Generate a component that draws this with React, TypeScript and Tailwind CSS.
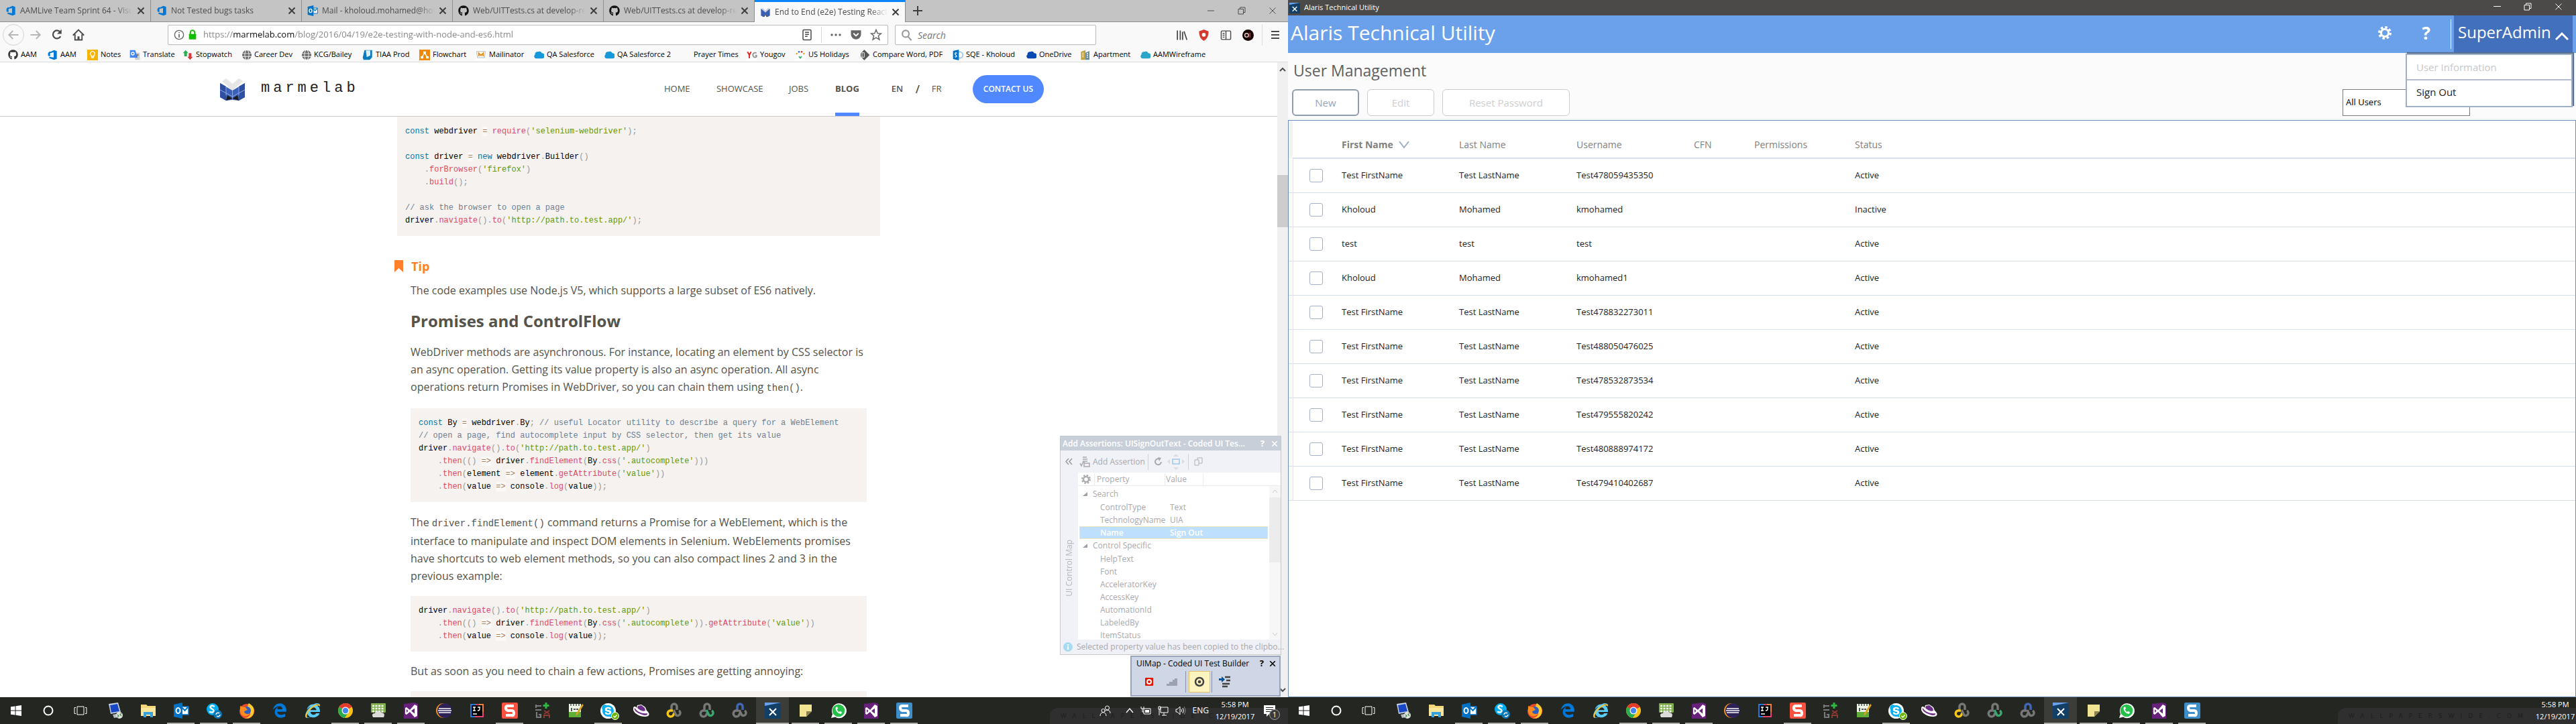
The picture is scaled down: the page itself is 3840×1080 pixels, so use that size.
import React from "react";
import { FaGithub, FaEdgeLegacy, FaInternetExplorer, FaSkype, FaGlobe } from "react-icons/fa6";

/* ---------- small drawings ---------- */

type Kids = { children?: React.ReactNode };

const Svg = ({ size = 16, box = 24, children }: Kids & { size?: number; box?: number }) => (
  <svg width={size} height={size} viewBox={`0 0 ${box} ${box}`} fill="none" aria-hidden="true" className="shrink-0">
    {children}
  </svg>
);

const AzureIcon = () => (
  <Svg>
    <path d="M16 1l6 2.500v17L16 23 5 19v-3l10 1.500V6L7 8v7l-4.500-1V7.500L6 4l2 1z" fill="#0078d7" />
  </Svg>
);
const OutlookIcon = ({ size = 16 }: { size?: number }) => (
  <Svg size={size}>
    <path d="M13 6h10v12H13z" fill="#fff" stroke="#0072c6" strokeWidth="1.500" />
    <path d="M14 8l3.500 4L22 7" stroke="#0072c6" strokeWidth="2" />
    <path d="M1 3l13-3v24L1 21z" fill="#0072c6" />
    <ellipse cx="7.500" cy="12" rx="3" ry="4" stroke="#fff" strokeWidth="2" />
  </Svg>
);
const MarmelabIcon = ({ size = 16 }: { size?: number }) => (
  <Svg size={size}>
    <path d="M2 4l10 8L22 4v16l-5 3-5-6-5 6-5-3z" fill="#3b5fb4" />
    <path d="M7 23l5-6 5 6-3-1-2-4-2 4z" fill="#222" />
    <path d="M6 3l6 6 6-6 3 2-9 8-9-8z" fill="#c9cfdd" />
  </Svg>
);
const CloudIcon = ({ color }: { color: string }) => (
  <Svg>
    <path d="M6 20a5 5 0 0 1-2-9 5 5 0 0 1 6-6 6 6 0 0 1 9 3 6 6 0 0 1 0 12z" fill={color} />
  </Svg>
);
const CloseMark = ({ size = 12, width = 2 }: { size?: number; width?: number }) => (
  <Svg size={size} box={12}>
    <path d="M1.500 1.500l9 9M10.500 1.500l-9 9" stroke="currentColor" strokeWidth={width} />
  </Svg>
);
const RestoreMark = () => (
  <Svg size={12} box={12}>
    <path d="M1 3.500h7.500V11H1zM3.500 3V1H11v7.500H9" stroke="currentColor" />
  </Svg>
);
const GearShape = ({ size = 20, hole = "#6ba1ea" }: { size?: number; hole?: string }) => (
  <Svg size={size}>
    <circle cx="12" cy="12" r="10" stroke="currentColor" strokeWidth="4" strokeDasharray="4.200 3.650" />
    <circle cx="12" cy="12" r="8.500" fill="currentColor" />
    <circle cx="12" cy="12" r="4.800" fill={hole} />
  </Svg>
);

/* ---------- browser: tabs, toolbar, bookmarks ---------- */

const tabs = [
  { title: "AAMLive Team Sprint 64 - Visual Studio", icon: <AzureIcon /> },
  { title: "Not Tested bugs tasks", icon: <AzureIcon /> },
  { title: "Mail - kholoud.mohamed@hotmail", icon: <OutlookIcon /> },
  { title: "Web/UITTests.cs at develop-release", icon: <FaGithub size={16} color="#111" /> },
  { title: "Web/UITTests.cs at develop-release", icon: <FaGithub size={16} color="#111" /> },
  { title: "End to End (e2e) Testing React Apps", icon: <MarmelabIcon />, active: true },
];

function TabStrip() {
  return (
    <div className="flex h-[33px] shrink-0 bg-[#c4c4c4] text-[#4c4c4c]">
      {tabs.map((t, i) => (
        <div
          key={i}
          className={
            t.active
              ? "flex w-[225px] items-center gap-1.5 border-t-[3px] border-r border-t-[#0a84ff] border-r-[#8a8a8a] bg-[#f9f9fa] px-2"
              : "flex w-[225px] items-center gap-1.5 border-r border-b border-[#8f8f8f] px-2"
          }
        >
          {t.icon}
          <button className="min-w-0 flex-1 overflow-hidden text-left text-[12px] whitespace-nowrap [mask-image:linear-gradient(to_right,black_85%,transparent)]">
            {t.title}
          </button>
          <button aria-label="Close tab" className="text-[#3d3d3d]">
            <CloseMark />
          </button>
        </div>
      ))}
      <div className="flex flex-1 items-center border-b border-[#8f8f8f] pl-2.5">
        <button aria-label="New tab" className="text-[#3d3d3d]">
          <Svg size={16} box={16}>
            <path d="M8 1v14M1 8h14" stroke="currentColor" strokeWidth="2" />
          </Svg>
        </button>
        <div className="ml-auto flex items-center gap-[34px] pr-[17px] text-[#4c4c4c]">
          <button aria-label="Minimize">
            <Svg size={12} box={12}>
              <path d="M1 6h10" stroke="currentColor" />
            </Svg>
          </button>
          <button aria-label="Restore">
            <RestoreMark />
          </button>
          <button aria-label="Close">
            <CloseMark width={1} />
          </button>
        </div>
      </div>
    </div>
  );
}

function NavBar() {
  return (
    <div className="flex h-[38px] shrink-0 items-center bg-[#f9f9fa] text-[#4a4a4a]">
      <button aria-label="Back" className="ml-1 flex size-8 items-center justify-center rounded-full border border-[#d4d4d4] text-[#b5b5b5]">
        <Svg size={18}>
          <path d="M22 12H3M11 4l-8 8 8 8" stroke="currentColor" strokeWidth="2.500" />
        </Svg>
      </button>
      <button aria-label="Forward" className="ml-2 text-[#b5b5b5]">
        <Svg size={18}>
          <path d="M2 12h19M13 4l8 8-8 8" stroke="currentColor" strokeWidth="2.500" />
        </Svg>
      </button>
      <button aria-label="Reload" className="ml-3.5">
        <Svg size={18}>
          <path d="M19 15a8 8 0 1 1-1-9" stroke="currentColor" strokeWidth="3" />
          <path d="M21 1v9h-9z" fill="currentColor" />
        </Svg>
      </button>
      <button aria-label="Home" className="ml-3.5">
        <Svg size={18}>
          <path d="M1 13L12 2l11 11M5 11v11h14V11" stroke="currentColor" strokeWidth="2.500" />
          <path d="M10 22v-7h4v7z" fill="currentColor" />
        </Svg>
      </button>
      <div className="ml-[124px] flex h-[30px] flex-1 items-center rounded-xs border border-[#bdbdbd] bg-white px-2 shadow-xs">
        <Svg size={16}>
          <circle cx="12" cy="12" r="10" stroke="#666" strokeWidth="2" />
          <path d="M12 10v8M12 6v2" stroke="#666" strokeWidth="2.500" />
        </Svg>
        <span className="ml-1">
          <Svg size={16}>
            <path d="M7 11V7a5 5 0 0 1 10 0v4" stroke="#12bc00" strokeWidth="3" />
            <rect x="4" y="10" width="16" height="12" rx="1" fill="#12bc00" />
          </Svg>
        </span>
        <input
          aria-label="Address"
          readOnly
          value="https://marmelab.com/blog/2016/04/19/e2e-testing-with-node-and-es6.html"
          className="ml-2 min-w-0 flex-1 bg-[linear-gradient(to_right,#858585_45px,#0c0c0d_45px,#0c0c0d_136px,#858585_136px)] bg-clip-text text-[13px] text-transparent outline-none"
        />
        <div className="flex items-center gap-3">
          <button aria-label="Reader view">
            <Svg size={18}>
              <rect x="4" y="2" width="16" height="20" rx="2" stroke="currentColor" strokeWidth="2" />
              <path d="M8 7h8M8 11h8M8 15h5" stroke="currentColor" strokeWidth="2" />
            </Svg>
          </button>
          <span className="h-6 w-px bg-[#d8d8d8]" />
          <button aria-label="Page actions">
            <Svg size={18}>
              <circle cx="4" cy="12" r="2.300" fill="#666" />
              <circle cx="12" cy="12" r="2.300" fill="#666" />
              <circle cx="20" cy="12" r="2.300" fill="#666" />
            </Svg>
          </button>
          <button aria-label="Save to Pocket">
            <Svg size={18}>
              <path d="M2 3h20v8a10 10 0 0 1-20 0z" fill="#666" />
              <path d="M7 9l5 5 5-5" stroke="#fff" strokeWidth="2.500" />
            </Svg>
          </button>
          <button aria-label="Bookmark this page">
            <Svg size={18}>
              <path d="M12 2l3 7 7 .500-5.500 4.500 2 7.500L12 17.500 5.500 21.500l2-7.500L2 9.500 9 9z" stroke="#666" strokeWidth="2" />
            </Svg>
          </button>
        </div>
      </div>
      <div className="ml-2.5 flex h-[30px] w-[300px] items-center gap-2 rounded-xs border border-[#bdbdbd] bg-white px-2 shadow-xs">
        <Svg size={17}>
          <circle cx="10" cy="9" r="7" stroke="#999" strokeWidth="3" />
          <path d="M15 15l7 8" stroke="#999" strokeWidth="3" />
        </Svg>
        <input aria-label="Search" placeholder="Search" className="min-w-0 flex-1 text-[14px] italic outline-none placeholder:text-[#757575]" />
      </div>
      <div className="ml-[119px] flex items-center gap-4 pr-3">
        <button aria-label="Library">
          <Svg size={17}>
            <path d="M3 2v20M9 2v20M14 5v17M17 4l6 18" stroke="currentColor" strokeWidth="2.500" />
          </Svg>
        </button>
        <button aria-label="Content blocker">
          <Svg size={17}>
            <path d="M12 0l10 4c0 10-3 16-10 20C5 20 2 14 2 4z" fill="#d43b2d" />
            <circle cx="12" cy="11" r="4" fill="#fff" />
          </Svg>
        </button>
        <button aria-label="Sidebars">
          <Svg size={17}>
            <rect x="2" y="3" width="20" height="18" rx="2" stroke="currentColor" strokeWidth="2" />
            <path d="M12 3v18M5 8h4M5 12h4M5 16h4" stroke="currentColor" strokeWidth="2" />
          </Svg>
        </button>
        <button aria-label="Screen recorder">
          <Svg size={17}>
            <circle cx="12" cy="12" r="12" fill="#1a0505" />
            <circle cx="9" cy="12" r="4" stroke="#e8c7c7" strokeWidth="2" />
            <path d="M16 7v10" stroke="#c33" strokeWidth="2" />
          </Svg>
        </button>
        <span className="-mx-1 h-8 w-px bg-[#dcdcdc]" />
        <button aria-label="Menu">
          <Svg size={14} box={14}>
            <path d="M1 2h12M1 7h12M1 12h12" stroke="currentColor" strokeWidth="2" />
          </Svg>
        </button>
      </div>
    </div>
  );
}

const Square = ({ color, children }: Kids & { color: string }) => (
  <Svg>
    <rect width="24" height="24" fill={color} />
    {children}
  </Svg>
);

const bookmarks: { name: string; width: string; icon: React.ReactNode }[] = [
  { name: "AAM", width: "w-[58px]", icon: <FaGithub size={15} color="#333" /> },
  { name: "AAM", width: "w-[60px]", icon: <AzureIcon /> },
  {
    name: "Notes",
    width: "w-[63px]",
    icon: (
      <Square color="#f4b400">
        <path d="M9 18h6M12 4a5 5 0 0 1 3 9v2H9v-2a5 5 0 0 1 3-9z" stroke="#fff" strokeWidth="2" />
      </Square>
    ),
  },
  {
    name: "Translate",
    width: "w-[79px]",
    icon: (
      <Svg>
        <path d="M9 7h14v16H13z" fill="#ccc" />
        <path d="M1 1h12l5 17H1z" fill="#4285f4" />
        <circle cx="7.500" cy="9" r="3" stroke="#fff" strokeWidth="2" />
        <path d="M15 12h6M18 10v2l-3 6" stroke="#666" strokeWidth="1.500" />
      </Svg>
    ),
  },
  {
    name: "Stopwatch",
    width: "w-[89px]",
    icon: (
      <Svg>
        <path d="M7 1l6 7h-3v7H4V8H1z" fill="#28b04a" />
        <path d="M17 23l-6-7h3V8h6v8h3z" fill="#d93838" />
      </Svg>
    ),
  },
  { name: "Career Dev", width: "w-[89px]", icon: <FaGlobe size={14} color="#6b6b6b" /> },
  { name: "KCG/Bailey", width: "w-[90px]", icon: <FaGlobe size={14} color="#6b6b6b" /> },
  {
    name: "TIAA Prod",
    width: "w-[85px]",
    icon: (
      <Svg>
        <path d="M5 1h17v16l-5 6H3l-2-5z" fill="#0a7bbd" />
        <path d="M8 2h10v11l-8 4z" fill="#d9f0fa" />
      </Svg>
    ),
  },
  {
    name: "Flowchart",
    width: "w-[84px]",
    icon: (
      <Square color="#f08705">
        <path d="M12 8l-6 8M12 8l6 8" stroke="#fff" strokeWidth="2" />
        <path d="M9 4h6v5H9zM3 15h6v5H3zM15 15h6v5h-6z" fill="#fff" />
      </Square>
    ),
  },
  {
    name: "Mailinator",
    width: "w-[86px]",
    icon: (
      <Square color="#fff">
        <path d="M2 4h20l-2 14H4z" stroke="#bbb" strokeWidth="1.500" />
        <path d="M7 15V8l5 5 5-5v7" stroke="#e88d1e" strokeWidth="3" />
      </Square>
    ),
  },
  { name: "QA Salesforce", width: "w-[105px]", icon: <CloudIcon color="#1798d8" /> },
  { name: "QA Salesforce 2", width: "w-[114px]", icon: <CloudIcon color="#1798d8" /> },
  { name: "Prayer Times", width: "w-[99px]", icon: <span className="w-4 shrink-0" /> },
  {
    name: "Yougov",
    width: "w-[72px]",
    icon: (
      <Square color="#fff">
        <path d="M2 5l4 7v7M10 5l-4 7" stroke="#d22" strokeWidth="3" />
        <path d="M22 8a5 5 0 1 0 0 8v-3h-3" stroke="#999" strokeWidth="3" />
      </Square>
    ),
  },
  {
    name: "US Holidays",
    width: "w-[96px]",
    icon: (
      <Square color="#fff">
        <path d="M9 15l3 4 3-4" stroke="#3a6" strokeWidth="2.500" />
        <circle cx="4" cy="9" r="2" fill="#f4a020" />
        <circle cx="9" cy="5" r="2" fill="#36c" />
        <circle cx="15" cy="5" r="2" fill="#d33" />
        <circle cx="20" cy="9" r="2" fill="#f4a020" />
      </Square>
    ),
  },
  {
    name: "Compare Word, PDF",
    width: "w-[139px]",
    icon: (
      <Svg>
        <path d="M11 0l12 12-12 12-8-9V9z" fill="#555" />
        <path d="M6 7h5v10H6z" stroke="#eee" strokeWidth="1.500" />
      </Svg>
    ),
  },
  {
    name: "SQE - Kholoud",
    width: "w-[109px]",
    icon: (
      <Svg>
        <circle cx="16" cy="12" r="7" stroke="#7cb8e4" strokeWidth="2" />
        <path d="M1 3l13-3v24L1 21z" fill="#0072c6" />
        <path d="M10 8c-5-2-6 2-3 4s3 5-2 4" stroke="#fff" strokeWidth="2" />
      </Svg>
    ),
  },
  { name: "OneDrive", width: "w-[81px]", icon: <CloudIcon color="#094ab2" /> },
  {
    name: "Apartment",
    width: "w-[89px]",
    icon: (
      <Svg>
        <path d="M2 5l10-4v22H2z" fill="#c7a13a" />
        <path d="M12 7l9-4v20h-9z" fill="#6c8f9c" />
        <path d="M5 8h3M5 12h3M5 16h3M15 9h3M15 13h3M15 17h3" stroke="#fff" strokeWidth="2" />
      </Svg>
    ),
  },
  { name: "AAMWireframe", width: "w-[110px]", icon: <CloudIcon color="#2ba5c9" /> },
];

function BookmarkBar() {
  return (
    <nav aria-label="Bookmarks" className="flex h-[22px] shrink-0 items-center border-b border-[#d9d9d9] bg-[#f9f9fa] pl-3 text-[11px] text-black">
      {bookmarks.map((b, i) => (
        <a key={i} href="#" className={`flex shrink-0 items-center gap-1 whitespace-nowrap ${b.width}`}>
          {b.icon}
          {b.name}
        </a>
      ))}
    </nav>
  );
}

/* ---------- blog page ---------- */

const tokenPattern =
  /('[^']*')|(\/\/.*)|\b(const|new)\b|\b(?!Builder)(\w+)(?=\()|(=>|=)|([.();]+)/g;
const tokenClass = [
  "text-[#669900]",
  "text-[#708090]",
  "text-[#0077aa]",
  "text-[#dd4a68]",
  "bg-white/50 text-[#a67f59]",
  "text-[#999999]",
];

function highlight(line: string) {
  const out: React.ReactNode[] = [];
  let last = 0;
  for (const m of line.matchAll(tokenPattern)) {
    if (m.index > last) out.push(line.slice(last, m.index));
    const kind = m.slice(1).findIndex((g) => g !== undefined);
    out.push(
      <span key={m.index} className={tokenClass[kind]}>
        {m[0]}
      </span>
    );
    last = m.index + m[0].length;
  }
  out.push(line.slice(last));
  return out;
}

function CodeBlock({ code, wide }: { code: string; wide?: boolean }) {
  return (
    <pre
      className={`${wide ? "-mx-5" : "mt-[17px]"} bg-[#f5f2f0] px-3 py-[13px] font-['Liberation_Mono',monospace] text-[12px] leading-[19px] text-black`}
    >
      {code.split("\n").map((l, i) => (
        <div key={i} className="min-h-[19px]">
          {highlight(l)}
        </div>
      ))}
    </pre>
  );
}

const snippet1 = `const webdriver = require('selenium-webdriver');

const driver = new webdriver.Builder()
    .forBrowser('firefox')
    .build();

// ask the browser to open a page
driver.navigate().to('http://path.to.test.app/');`;

const snippet2 = `const By = webdriver.By; // useful Locator utility to describe a query for a WebElement
// open a page, find autocomplete input by CSS selector, then get its value
driver.navigate().to('http://path.to.test.app/')
    .then(() => driver.findElement(By.css('.autocomplete')))
    .then(element => element.getAttribute('value'))
    .then(value => console.log(value));`;

const snippet3 = `driver.navigate().to('http://path.to.test.app/')
    .then(() => driver.findElement(By.css('.autocomplete')).getAttribute('value'))
    .then(value => console.log(value));`;

const InlineCode = ({ children }: Kids) => (
  <code className="font-['Liberation_Mono',monospace] text-[14px]">{children}</code>
);

function SiteHeader() {
  return (
    <header className="h-[81px] shrink-0 border-b border-[#cccccc] bg-white">
      <div className="mx-auto flex h-full w-full max-w-[1248px] items-center text-[13px] text-[#55534a]">
        <a href="#" className="flex items-center gap-6 text-[#222]">
          <svg width="37" height="33" viewBox="0 0 37 33" aria-hidden="true">
            <path d="M3 4l6-4 9.500 8L28 0l6 4-15.500 14z" fill="#e6e6e6" />
            <path d="M0 7l18.500 11v14L9 33 0 28z" fill="#3b62b8" />
            <path d="M37 7L18.500 18v14L28 33l9-5z" fill="#3b62b8" />
            <path d="M0 7l9 5v21l-9-5zM37 7l-9 5v21l9-5z" fill="#2f4fa0" />
            <path d="M9 33l2-8 7.500 5zM28 33l-2-8-7.500 5z" fill="#1d1d1f" />
            <path d="M9 12v13M28 12v13M0 17l18.500 10L37 17M18.500 18v12" stroke="#8ea9e3" strokeWidth="1" fill="none" />
          </svg>
          <span className="pb-1 font-['Liberation_Mono',monospace] text-[22px] tracking-[5px]">marmelab</span>
        </a>
        <nav className="ml-auto flex h-full items-center">
          <a href="#" className="w-[78px]">HOME</a>
          <a href="#" className="w-[108px]">SHOWCASE</a>
          <a href="#" className="w-[69px]">JOBS</a>
          <a href="#" className="relative mr-12 flex h-full items-center font-bold after:absolute after:inset-x-0 after:bottom-0 after:h-[5px] after:bg-[#5088ff]">
            BLOG
          </a>
          <a href="#" className="w-9 font-semibold">EN</a>
          <span className="w-6 text-[16px] font-semibold">/</span>
          <a href="#" className="w-[61px]">FR</a>
        </nav>
        <button className="mr-5 h-[42px] rounded-full bg-[#5088ff] px-4 text-[12px] font-semibold text-white">CONTACT US</button>
      </div>
    </header>
  );
}

function BlogPage() {
  return (
    <div className="flex min-h-0 flex-1 bg-white">
      <div className="flex min-w-0 flex-1 flex-col overflow-hidden">
        <SiteHeader />
        <article className="mx-auto w-full max-w-[680px] shrink-0 text-[16px] leading-[26px] text-[#55534a]">
          <CodeBlock code={snippet1} wide />
          <h4 className="mt-8 -ml-6 flex items-center gap-3 text-[18px] font-bold text-[#ff7f2a]">
            <svg width="13" height="18" viewBox="0 0 13 18" aria-hidden="true">
              <path d="M1 0h11q1 0 1 1v17l-6.500-6L0 18V1q0-1 1-1z" fill="#ff7f2a" />
            </svg>
            Tip
          </h4>
          <p className="mt-2.5">The code examples use Node.js V5, which supports a large subset of ES6 natively.</p>
          <h2 className="mt-[17px] text-[24px] leading-8 font-bold">Promises and ControlFlow</h2>
          <p className="mt-[17px]">
            WebDriver methods are asynchronous. For instance, locating an element by CSS selector is
            <br />
            an async operation. Getting its value property is also an async operation. All async
            <br />
            operations return Promises in WebDriver, so you can chain them using <InlineCode>then()</InlineCode>.
          </p>
          <CodeBlock code={snippet2} />
          <p className="mt-[17px]">
            The <InlineCode>driver.findElement()</InlineCode> command returns a Promise for a WebElement, which is the
            <br />
            interface to manipulate and inspect DOM elements in Selenium. WebElements promises
            <br />
            have shortcuts to web element methods, so you can also compact lines 2 and 3 in the
            <br />
            previous example:
          </p>
          <CodeBlock code={snippet3} />
          <p className="mt-4">But as soon as you need to chain a few actions, Promises are getting annoying:</p>
          <CodeBlock code={"\n"} />
        </article>
      </div>
      <div className="flex w-4 shrink-0 flex-col items-center bg-[#f0f0f0] py-1.5 text-[#505050]">
        <Svg size={10} box={10}>
          <path d="M1 7l4-4 4 4" stroke="currentColor" strokeWidth="2" />
        </Svg>
        <div className="mt-[152px] h-[78px] w-full bg-[#cdcdcd]" />
        <div className="mt-auto">
          <Svg size={10} box={10}>
            <path d="M1 3l4 4 4-4" stroke="currentColor" strokeWidth="2" />
          </Svg>
        </div>
      </div>
    </div>
  );
}

/* ---------- floating test builder windows ---------- */

const properties: { name: string; value?: string; group?: boolean; selected?: boolean }[] = [
  { name: "Search", group: true },
  { name: "ControlType", value: "Text" },
  { name: "TechnologyName", value: "UIA" },
  { name: "Name", value: "Sign Out", selected: true },
  { name: "Control Specific", group: true },
  { name: "HelpText" },
  { name: "Font" },
  { name: "AcceleratorKey" },
  { name: "AccessKey" },
  { name: "AutomationId" },
  { name: "LabeledBy" },
  { name: "ItemStatus" },
];

function AssertionWindow() {
  return (
    <section
      aria-label="Add Assertions"
      className="absolute right-2.5 bottom-[63px] flex h-[327px] w-[330px] flex-col border border-[#c4c7cc] bg-white/95 text-[12px] text-[#a8a8ad]"
    >
      <div className="flex h-[21px] shrink-0 items-center bg-[#c8cfd9] pr-1 pl-[3px] font-semibold text-white">
        Add Assertions: UISignOutText - Coded UI Tes...
        <button aria-label="Help" className="ml-auto text-[13px] font-bold">?</button>
        <button aria-label="Close window" className="ml-2.5">
          <CloseMark size={10} />
        </button>
      </div>
      <div className="flex h-[33px] shrink-0 items-center bg-[#f0f2f7]">
        <button aria-label="Collapse" className="ml-[7px] text-[#9a9aa0]">
          <Svg size={11} box={11}>
            <path d="M5 1L1 5.500 5 10M10 1L6 5.500 10 10" stroke="currentColor" strokeWidth="1.500" />
          </Svg>
        </button>
        <button className="ml-2.5 flex items-center gap-1">
          <Svg size={16} box={16}>
            <path d="M5 1h6M5 4h7M5 7h7M7 10h8v5H7V8M1 10l2 4 3-7" stroke="#a8a8ad" strokeWidth="1.500" />
          </Svg>
          Add Assertion
        </button>
        <span className="ml-1 h-6 w-px bg-[#cfd2da]" />
        <button aria-label="Refresh" className="ml-2">
          <Svg size={13} box={13}>
            <path d="M11 7a4.500 4.500 0 1 1-2-4" stroke="#a8a8ad" strokeWidth="2" />
            <path d="M6 0l5 1-3 5z" fill="#a8a8ad" />
          </Svg>
        </button>
        <button aria-label="Navigate" className="ml-1.5">
          <Svg size={28} box={28}>
            <path d="M9 10h10v7H9z" stroke="#9cc8ec" strokeWidth="1.500" />
            <path d="M14 2l4 4h-8zM14 26l4-4h-8zM1 13.500l4-4v8zM27 13.500l-4-4v8z" fill="#dcdce0" />
          </Svg>
        </button>
        <span className="ml-1 h-6 w-px bg-[#cfd2da]" />
        <button aria-label="Copy" className="ml-2">
          <Svg size={13} box={13}>
            <path d="M1 4h6v8H1zM5 4V1h7v8H7" stroke="#b0b0b5" />
          </Svg>
        </button>
      </div>
      <div className="flex min-h-0 flex-1">
        <div className="flex w-[26px] shrink-0 items-center justify-center bg-[#f0f2f7] pt-9">
          <span className="rotate-180 text-[#b5b5bd] [writing-mode:vertical-rl]">UI Control Map</span>
        </div>
        <div className="flex min-w-0 flex-1 flex-col overflow-hidden">
          <div className="flex h-5 shrink-0 items-center border-b border-[#ececf0]">
            <span className="flex w-6 justify-center">
              <GearShape size={14} hole="#fff" />
            </span>
            <span className="w-[105px] border-l border-[#ececf0] pl-[3px]">Property</span>
            <span className="w-[58px] border-x border-[#ececf0] pl-px">Value</span>
          </div>
          <div className="flex min-h-0 flex-1">
            <ul className="min-w-0 flex-1 overflow-hidden px-0.5 pt-0.5">
              {properties.map((p) => (
                <li
                  key={p.name}
                  className={
                    p.selected
                      ? "flex h-[19px] items-center border border-[#efe4b8] bg-[#bfdfff] pl-[30px] font-semibold text-white"
                      : p.group
                        ? "flex h-5 items-center gap-2 pl-1"
                        : "flex h-[19px] items-center pl-[31px]"
                  }
                >
                  {p.group && (
                    <Svg size={8} box={8}>
                      <path d="M8 1v6H1z" fill="#a0a0a5" />
                    </Svg>
                  )}
                  <span className={p.group ? "whitespace-nowrap" : "w-[104px] whitespace-nowrap"}>{p.name}</span>
                  {p.value && <span className="whitespace-nowrap">{p.value}</span>}
                </li>
              ))}
            </ul>
            <div className="flex w-[17px] shrink-0 flex-col items-center bg-[#f7f7f7] py-1 text-[#c5c5c8]">
              <Svg size={9} box={9}>
                <path d="M1 6l3.500-4L8 6" stroke="currentColor" />
              </Svg>
              <div className="mt-1 h-[97px] w-full bg-[#ececec]" />
              <div className="mt-auto">
                <Svg size={9} box={9}>
                  <path d="M1 3l3.500 4L8 3" stroke="currentColor" />
                </Svg>
              </div>
            </div>
          </div>
        </div>
      </div>
      <div className="flex h-[22px] shrink-0 items-center gap-1.5 bg-[#eff1f6] pl-1">
        <Svg size={14} box={14}>
          <circle cx="7" cy="7" r="7" fill="#a8dcf2" />
          <path d="M7 6v5M7 3v2" stroke="#fff" strokeWidth="2" />
        </Svg>
        <span className="whitespace-nowrap">Selected property value has been copied to the clipbo...</span>
      </div>
    </section>
  );
}

function BuilderWindow() {
  return (
    <section
      aria-label="Coded UI Test Builder"
      className="absolute right-[11px] bottom-px flex h-[61px] w-[224px] flex-col border-2 border-[#98a5bd] bg-[#cfd6e5] text-[12px] text-black"
    >
      <div className="flex h-5 items-center pr-[5px] pl-[7px]">
        UIMap - Coded UI Test Builder
        <button aria-label="Builder help" className="ml-auto text-[13px] font-bold">?</button>
        <button aria-label="Close builder" className="ml-2">
          <CloseMark size={10} width={2} />
        </button>
      </div>
      <div className="flex flex-1 items-center pb-1 pl-5">
        <button aria-label="Stop recording">
          <Svg size={12} box={12}>
            <rect width="12" height="12" rx="1" fill="#e51400" />
            <circle cx="6" cy="6" r="3" stroke="#fff" strokeWidth="2" />
          </Svg>
        </button>
        <button aria-label="Show recorded steps" className="ml-5">
          <Svg size={16} box={16}>
            <path d="M0 14V11h4V8h5V5h3V3h4v11z" fill="#9ba1b0" />
          </Svg>
        </button>
        <span className="ml-3 h-8 w-px bg-[#8a93a8]" />
        <button aria-label="Add assertions" className="ml-1 flex size-8 items-center justify-center border border-[#e5c365] bg-[#fdf4bf]">
          <Svg size={16} box={16}>
            <circle cx="8" cy="8" r="6" stroke="#424242" strokeWidth="2.500" />
            <circle cx="8" cy="8" r="2.300" fill="#424242" />
          </Svg>
        </button>
        <span className="ml-0.5 h-8 w-px bg-[#8a93a8]" />
        <button aria-label="Generate code" className="ml-2.5">
          <Svg size={18} box={18}>
            <path d="M9 2h8M11 7h6M5 12h11M5 16h8" stroke="#424242" strokeWidth="2.500" />
            <path d="M0 4h4V1l5 4.500L4 10V7H0z" fill="#00539c" />
          </Svg>
        </button>
      </div>
    </section>
  );
}

/* ---------- user management application ---------- */

const users = [
  ["Test FirstName", "Test LastName", "Test478059435350", "Active"],
  ["Kholoud", "Mohamed", "kmohamed", "Inactive"],
  ["test", "test", "test", "Active"],
  ["Kholoud", "Mohamed", "kmohamed1", "Active"],
  ["Test FirstName", "Test LastName", "Test478832273011", "Active"],
  ["Test FirstName", "Test LastName", "Test488050476025", "Active"],
  ["Test FirstName", "Test LastName", "Test478532873534", "Active"],
  ["Test FirstName", "Test LastName", "Test479555820242", "Active"],
  ["Test FirstName", "Test LastName", "Test480888974172", "Active"],
  ["Test FirstName", "Test LastName", "Test479410402687", "Active"],
];

const AppLogo = ({ size = 16 }: { size?: number }) => (
  <Svg size={size}>
    <rect width="24" height="24" fill="#123f66" />
    <path d="M0 0h24L0 5z" fill="#6ba1ea" />
    <path d="M7 9l10 10M17 9L7 19" stroke="#fff" strokeWidth="2" />
  </Svg>
);

function UserApp() {
  return (
    <div className="flex min-h-0 flex-1 flex-col bg-[#fbfbfb]">
      <div className="flex h-[23px] shrink-0 items-center gap-1.5 bg-[#4c4a48] pl-0.5 text-[11px] text-white">
        <AppLogo />
        Alaris Technical Utility
        <div className="ml-auto flex items-center gap-[34px] pr-5 pb-1">
          <button aria-label="Minimize application">
            <Svg size={11} box={11}>
              <path d="M0 5.500h11" stroke="currentColor" />
            </Svg>
          </button>
          <button aria-label="Restore application">
            <RestoreMark />
          </button>
          <button aria-label="Close application">
            <CloseMark width={1} />
          </button>
        </div>
      </div>
      <header className="flex h-14 shrink-0 items-center bg-[#6ba1ea] pr-[5px] pl-1 text-white">
        <h1 className="pb-1.5 text-[30px]">Alaris Technical Utility</h1>
        <button aria-label="Settings" className="mr-[46px] ml-auto pb-1">
          <GearShape />
        </button>
        <button aria-label="Help" className="mr-[30px] pb-1 text-[26px] font-bold">?</button>
        <span className="h-11 w-px bg-white" />
        <div className="relative ml-1 h-full">
          <button aria-expanded="true" className="flex h-full w-[177px] items-center justify-between bg-[#4370bd] px-1.5 pb-1.5 text-[24px]">
            SuperAdmin
            <span className="pt-2.5">
              <Svg size={20} box={20}>
                <path d="M1 16l9-9 9 9" stroke="#fff" strokeWidth="3" />
              </Svg>
            </span>
          </button>
          <div role="menu" className="absolute top-full right-0 z-10 mt-px flex w-[249px] flex-col border-2 border-[#9fb0c6] bg-white text-[15px] shadow-[2px_-2px_1px_#5a7090]">
            <button role="menuitem" disabled className="h-9 pl-3.5 text-left text-[#c8c8c8]">User Information</button>
            <button role="menuitem" className="h-10 border-t-2 border-[#b4bccd] pb-1 pl-3.5 text-left text-[#222]">Sign Out</button>
          </div>
        </div>
      </header>
      <div className="flex h-[100px] shrink-0 flex-col">
        <h2 className="mt-2.5 pl-2 text-[23px] leading-8 text-[#5f5f5f]">User Management</h2>
        <div className="mt-3 flex items-center gap-3 pl-1.5 text-[15px]">
          <button className="h-10 w-[100px] rounded-md border-2 border-[#8f9caf] bg-white text-[#97a5bb]">New</button>
          <button disabled className="h-10 w-[100px] rounded-md border border-[#cdcdcd] bg-white text-[#cfcfcf]">Edit</button>
          <button disabled className="h-10 w-[190px] rounded-md border border-[#cdcdcd] bg-white text-[#cfcfcf]">Reset Password</button>
          <select aria-label="Filter users" className="mr-[158px] ml-auto h-10 w-[190px] appearance-none border border-[#7a7a7a] bg-white px-1 text-[13px] text-black">
            <option>All Users</option>
          </select>
        </div>
      </div>
      <div className="min-h-0 flex-1 border border-[#6d8fb8] bg-white">
        <table className="w-full table-fixed border-collapse text-left text-[13px] text-[#222]">
          <colgroup>
            <col className="w-1.5" />
            <col className="w-[73px]" />
            <col className="w-[175px]" />
            <col className="w-[175px]" />
            <col className="w-[175px]" />
            <col className="w-[90px]" />
            <col className="w-[150px]" />
            <col />
          </colgroup>
          <thead>
            <tr className="h-14 text-[14px] text-[#808080]">
              <th className="bg-[#f3f3f3]" />
              <th className="border-b-2 border-[#d7e0ea]" />
              <th className="border-b-2 border-[#d7e0ea] pt-4 font-bold">
                <button className="flex items-center gap-2">
                  First Name
                  <Svg size={16} box={16}>
                    <path d="M1 3l7 9 7-9" stroke="#a0b0c4" strokeWidth="2" />
                  </Svg>
                </button>
              </th>
              {["Last Name", "Username", "CFN", "Permissions", "Status"].map((h) => (
                <th key={h} className="border-b-2 border-[#d7e0ea] pt-4 font-normal">
                  {h}
                </th>
              ))}
            </tr>
          </thead>
          <tbody>
            {users.map(([first, last, username, status], i) => (
              <tr key={i} className="h-[51px] border-b border-[#d7e0ea]">
                <td className="border-r border-[#e4e4e8] bg-[#fafafa]" />
                <td className="pl-6">
                  <input
                    type="checkbox"
                    aria-label={`Select ${username}`}
                    className="block size-5 appearance-none rounded-[3px] border border-[#a3b1c9] bg-white"
                  />
                </td>
                <td>{first}</td>
                <td>{last}</td>
                <td>{username}</td>
                <td />
                <td />
                <td>{status}</td>
              </tr>
            ))}
          </tbody>
        </table>
      </div>
    </div>
  );
}

/* ---------- taskbar ---------- */

const LinkRings = ({ color, part }: { color: string; part: number }) => (
  <Svg size={24}>
    <path d="M8 12V6a4 4 0 0 1 8 0v5" stroke={part === 0 ? color : "#777"} strokeWidth="3.500" />
    <path d="M10 12H6a4.500 4.500 0 1 0 5 6l2-4" stroke={part === 1 ? color : "#777"} strokeWidth="3.500" />
    <path d="M11 11l4 8a4 4 0 1 0 4-7" stroke={part === 2 ? color : "#777"} strokeWidth="3.500" />
  </Svg>
);
const VisualStudio = () => (
  <Svg size={24}>
    <path d="M1 2l16-2 5 2v22H1z" fill="#68217a" />
    <path
      d="M3 8l2-1 5 4 7-8 4 2v15l-4 2-7-8-5 4-2-1zM5 10v5l2.500-2.500zM17 8.500l-5 4 5 4z"
      fill="#fff"
      fillRule="evenodd"
    />
  </Svg>
);

type Task = { name: string; icon: React.ReactNode; open?: boolean; active?: boolean };
const tasks: Task[] = [
  {
    name: "Remote Desktop",
    icon: (
      <Svg size={24}>
        <path d="M2 2l14-2 4 14-15 3z" fill="#c9d3e6" />
        <path d="M4 4l11-2 3 11-12 2z" fill="#1946c4" />
        <path d="M8 18l10-2 3 5-11 2z" fill="#b9bec7" />
        <circle cx="18" cy="19" r="5" fill="#dfe4df" />
        <path d="M15 18l2 2-2 2M21 16l-2 2 2 2" stroke="#3c8a3c" strokeWidth="1.200" />
      </Svg>
    ),
  },
  {
    name: "File Explorer",
    icon: (
      <Svg size={24}>
        <path d="M1 3h8l2 2h12v15H1z" fill="#f5d77a" />
        <path d="M1 8h22v12H1z" fill="#fbe69b" />
        <path d="M5 22v-8h14v8h-4v-4H9v4z" fill="#36a1dc" />
      </Svg>
    ),
  },
  { name: "Outlook", icon: <OutlookIcon size={24} />, open: true },
  {
    name: "Skype for Business",
    open: true,
    icon: (
      <Svg size={24}>
        <circle cx="10" cy="10" r="9" fill="#00aff0" />
        <circle cx="17.500" cy="17.500" r="6.500" fill="#0a78b8" />
        <path d="M13 6c-6-3-9 1-4 3.500s2 7-4 4" stroke="#fff" strokeWidth="2.500" />
        <path d="M15 18a3 3 0 0 1 5-2M21 18a3 3 0 0 1-5 2" stroke="#fff" strokeWidth="1.500" />
      </Svg>
    ),
  },
  {
    name: "Firefox",
    open: true,
    icon: (
      <Svg size={24}>
        <circle cx="12" cy="13" r="11" fill="#e8482c" />
        <path d="M15 1c7 4 9 9 7 15a11 11 0 0 1-14 7c8 0 11-6 8-12-3-2-4-6-1-10z" fill="#ffcb2f" />
        <circle cx="12" cy="12" r="6" fill="#2b5fc4" />
        <path d="M2 5c3 1 5 2 8 2l3 4-5 2c0 4 5 5 9 3-4 7-14 6-15-3z" fill="#ff8a1e" />
      </Svg>
    ),
  },
  { name: "Edge", icon: <FaEdgeLegacy size={22} color="#0078d7" /> },
  {
    name: "Internet Explorer",
    icon: (
      <span className="relative flex">
        <FaInternetExplorer size={22} color="#5ccbf5" />
        <svg width="24" height="24" viewBox="0 0 24 24" fill="none" aria-hidden="true" className="absolute inset-0">
          <path d="M2 21C-1 14 14 0 22 3" stroke="#f5c531" strokeWidth="2" />
        </svg>
      </span>
    ),
  },
  {
    name: "Chrome",
    open: true,
    icon: (
      <Svg size={24}>
        <circle cx="12" cy="12" r="11" fill="#fbc116" />
        <path d="M12 12L2.500 6.500a11 11 0 0 1 19 0z" fill="#e33b2e" />
        <path d="M12 12L2.500 6.500A11 11 0 0 0 11 23l5-8z" fill="#2da94f" />
        <circle cx="12" cy="12" r="5.500" fill="#fff" />
        <circle cx="12" cy="12" r="4.200" fill="#4285f4" />
      </Svg>
    ),
  },
  {
    name: "On-screen keyboard",
    open: true,
    icon: (
      <Svg size={24}>
        <rect x="1" y="1" width="22" height="14" rx="1" fill="#7fae4c" />
        <path d="M3 5h18M3 9h18M3 13h18" stroke="#f4f8ee" strokeWidth="2.500" strokeDasharray="3 1.500" />
        <path d="M4 22c-2-4-1-6 3-6 1-4 8-5 9-1 5 0 6 3 4 7z" fill="#dcdcdc" />
      </Svg>
    ),
  },
  { name: "Visual Studio", open: true, icon: <VisualStudio /> },
  {
    name: "Eclipse",
    icon: (
      <Svg size={24}>
        <circle cx="11" cy="12" r="11" fill="#f7941e" />
        <circle cx="13" cy="12" r="11" fill="#2c2255" />
        <path d="M4 9h18M3 12h20M4 15h18" stroke="#fff" strokeWidth="1.500" />
      </Svg>
    ),
  },
  {
    name: "IntelliJ IDEA",
    icon: (
      <Svg size={24}>
        <path d="M2 2h10l10 4v16H8L2 16z" fill="#e8436f" />
        <path d="M2 2h8l-2 20H2z" fill="#1e7ce0" />
        <path d="M14 2h8v14z" fill="#f0803c" />
        <rect x="4" y="4" width="16" height="16" fill="#000" />
        <path d="M6 7h4M8 7v5M6 12h4M13 7h4M16 7v3q0 2-3 2M6 17h6" stroke="#fff" strokeWidth="1.300" />
      </Svg>
    ),
  },
  {
    name: "Snagit Editor",
    open: true,
    icon: (
      <Svg size={24}>
        <rect width="24" height="24" rx="2" fill="#f9503f" />
        <path d="M18 5H9q-3 0-3 3t3 4h6q3 0 3 4t-3 3H6" stroke="#fff" strokeWidth="4" />
      </Svg>
    ),
  },
  {
    name: "Git Extensions",
    icon: (
      <Svg size={24}>
        <path d="M3 14v8h6v-4H6M1 11h9M2 8V3M2 5h8" stroke="#7a7a7a" strokeWidth="2.200" />
        <path d="M17 0v9M12.500 4.500h9" stroke="#2fb344" strokeWidth="3" />
        <path d="M14 23v-4h8v4M14 12l8 5M22 12l-8 5" stroke="#8f3a30" strokeWidth="2" />
      </Svg>
    ),
  },
  {
    name: "Notepad++",
    icon: (
      <Svg size={24}>
        <path d="M2 2h18v20H2z" fill="#eef5e8" />
        <path d="M2 14h18v8H2z" fill="#5fae36" />
        <path d="M5 2v3M9 2v3M13 2v3M17 2v3" stroke="#555" strokeWidth="1.500" />
        <path d="M6 8v5M9 10h3M13 10h3" stroke="#222" strokeWidth="1.500" />
        <path d="M22 2l2 2-9 14-3 1 1-3z" fill="#d9a11e" />
      </Svg>
    ),
  },
  {
    name: "Skype",
    open: true,
    icon: (
      <span className="relative flex size-6 items-center justify-center">
        <span className="flex rounded-full bg-white p-px">
          <FaSkype size={21} color="#00aff0" />
        </span>
        <svg width="12" height="12" viewBox="0 0 12 12" fill="none" aria-hidden="true" className="absolute -right-1 -bottom-0.5">
          <circle cx="6" cy="6" r="5.500" fill="#6bb700" stroke="#fff" />
          <path d="M3.500 6l2 2 3-3.500" stroke="#fff" strokeWidth="1.500" />
        </svg>
      </span>
    ),
  },
  {
    name: "Planet hat",
    icon: (
      <Svg size={24}>
        <path d="M6 4l6-1 6 4 2 5c6 5 4 9-3 9C8 21-2 14 0 8c1-3 4-2 5 0z" fill="#fff" />
        <path d="M7 5l5-1 5 4 1 4c-4 2-9-1-12-4zM2 8c4 6 11 9 19 8 1 3-3 4-8 2C6 16 0 11 2 8z" fill="#6b2f86" />
      </Svg>
    ),
  },
  { name: "Link tool yellow", icon: <LinkRings color="#f5c518" part={1} /> },
  { name: "Link tool green", icon: <LinkRings color="#3aa76d" part={2} /> },
  { name: "Link tool blue", icon: <LinkRings color="#3f68b5" part={0} /> },
  { name: "Alaris Technical Utility", open: true, active: true, icon: <AppLogo size={24} /> },
  {
    name: "Sticky Notes",
    open: true,
    icon: (
      <Svg size={24}>
        <path d="M3 3h18v10l-8 8H3z" fill="#f1e594" />
        <path d="M13 13h8l-8 8z" fill="#8c8352" />
      </Svg>
    ),
  },
  {
    name: "WhatsApp",
    open: true,
    icon: (
      <Svg size={24}>
        <path d="M1 23l2-6A11 11 0 1 1 7 21.500z" fill="#fff" />
        <circle cx="12" cy="12" r="9.300" fill="#25c14a" />
        <path d="M8 7c-2 5 4 10 8 10l1-3-3-1-1 1c-2-1-3-2-3-4l1-1-1-3z" fill="#fff" />
      </Svg>
    ),
  },
  { name: "Visual Studio 2", open: true, icon: <VisualStudio /> },
  {
    name: "Snagit",
    open: true,
    icon: (
      <Svg size={24}>
        <rect width="24" height="24" rx="2" fill="#3d8ec9" />
        <path d="M18 5H9q-3 0-3 3t3 4h6q3 0 3 4t-3 3H6" stroke="#fff" strokeWidth="4" />
      </Svg>
    ),
  },
];

function Taskbar({ tray }: { tray?: boolean }) {
  return (
    <footer className="relative flex h-10 shrink-0 bg-[#242622] text-white">
      <div
        aria-hidden="true"
        className="absolute right-0 bottom-0 h-6 w-[355px] overflow-hidden rounded-tl-xl bg-[#2f2f2f] pl-4 font-['DejaVu_Sans'] text-[9px] leading-6 tracking-[9px] whitespace-nowrap text-[#1e1e1e]"
      >
        WALLPAPERSWIDE.COM
      </div>
      <button aria-label="Start" className="flex w-12 items-center justify-center">
        <Svg size={16} box={16}>
          <path d="M0 2.300L6.500 1.400v6.100H0zM7.500 1.200L16 0v7.500H7.500zM0 8.500h6.500v6.100L0 13.700zM7.500 8.500H16V16l-8.500-1.200z" fill="#fff" />
        </Svg>
      </button>
      <button aria-label="Cortana" className="flex w-12 items-center justify-center">
        <Svg size={16} box={16}>
          <circle cx="8" cy="8" r="6.500" stroke="#fff" strokeWidth="2" />
        </Svg>
      </button>
      <button aria-label="Task view" className="flex w-12 items-center justify-center">
        <Svg size={20} box={20}>
          <path d="M5 4h10v12H5zM3 5.500H1v9h2M17 5.500h2v9h-2" stroke="#fff" />
        </Svg>
      </button>
      <div className="ml-[3px] flex">
        {tasks.map((t) => (
          <button
            key={t.name}
            aria-label={t.name}
            className={`relative flex w-[49px] items-center justify-center ${t.active ? "bg-[#3c3d39]" : ""}`}
          >
            {t.icon}
            {t.open && <span className={`absolute bottom-0 h-0.5 bg-[#b0aeab] ${t.active ? "inset-x-0" : "inset-x-1"}`} />}
          </button>
        ))}
      </div>
      <div className="relative ml-auto flex items-center">
        {tray && (
          <div className="mr-8 flex items-center gap-2.5 text-[13px]">
            <button aria-label="People" className="mr-3">
              <Svg size={17} box={17}>
                <circle cx="5.500" cy="8" r="2.500" stroke="#fff" />
                <circle cx="11.500" cy="4" r="3" stroke="#fff" />
                <path d="M1 16c0-7 9-7 9 0M8 9c3-3 8-2 8 3" stroke="#fff" />
              </Svg>
            </button>
            <button aria-label="Show hidden icons">
              <Svg size={12} box={12}>
                <path d="M1 9l5-6 5 6" stroke="#fff" strokeWidth="1.300" />
              </Svg>
            </button>
            <Svg size={16} box={16}>
              <path d="M5 5h10v8H5zM1 2v3h4V2M3 5v5h2" stroke="#fff" />
              <path d="M7 7h6v4H7z" fill="#fff" />
            </Svg>
            <Svg size={16} box={16}>
              <path d="M4 3h11v8H4zM9 11v4M6 15h7M1 2h3v4H1zM2 6v9" stroke="#fff" />
            </Svg>
            <Svg size={16} box={16}>
              <path d="M1 6h2l4-4v12l-4-4H1zM9 6q1 2 0 4M11 4q3 4 0 8" stroke="#fff" />
              <path d="M13 2q4 6 0 12" stroke="#888" />
            </Svg>
            <button className="text-[12px]">ENG</button>
          </div>
        )}
        <button className={`w-[62px] text-center text-[11px] leading-[18px] ${tray ? "-ml-6" : ""}`}>
          5:58 PM
          <br />
          12/19/2017
        </button>
        {tray && (
          <button aria-label="1 new notification" className="relative mr-3 ml-3 flex h-10 w-6 items-center">
            <Svg size={17} box={17}>
              <path d="M0 0h17v13H8l-4 4v-4H0z" fill="#fff" />
              <path d="M3 3.500h11M3 6.500h11M3 9.500h11" stroke="#242622" />
            </Svg>
            <span className="absolute right-0 bottom-1.5 flex size-4 items-center justify-center rounded-full border border-[#a0a0a0] bg-[#3a3a3a] text-[11px]">
              1
            </span>
          </button>
        )}
      </div>
    </footer>
  );
}

export default function App() {
  return (
    <div className="flex h-screen w-full overflow-hidden bg-white font-['Open_Sans','Noto_Sans',sans-serif]">
      <div className="flex min-w-0 flex-1 flex-col">
        <div className="relative flex min-h-0 flex-1 flex-col">
          <TabStrip />
          <NavBar />
          <BookmarkBar />
          <BlogPage />
          <AssertionWindow />
          <BuilderWindow />
        </div>
        <Taskbar tray />
      </div>
      <div className="flex min-w-0 flex-1 flex-col">
        <UserApp />
        <Taskbar />
      </div>
    </div>
  );
}
